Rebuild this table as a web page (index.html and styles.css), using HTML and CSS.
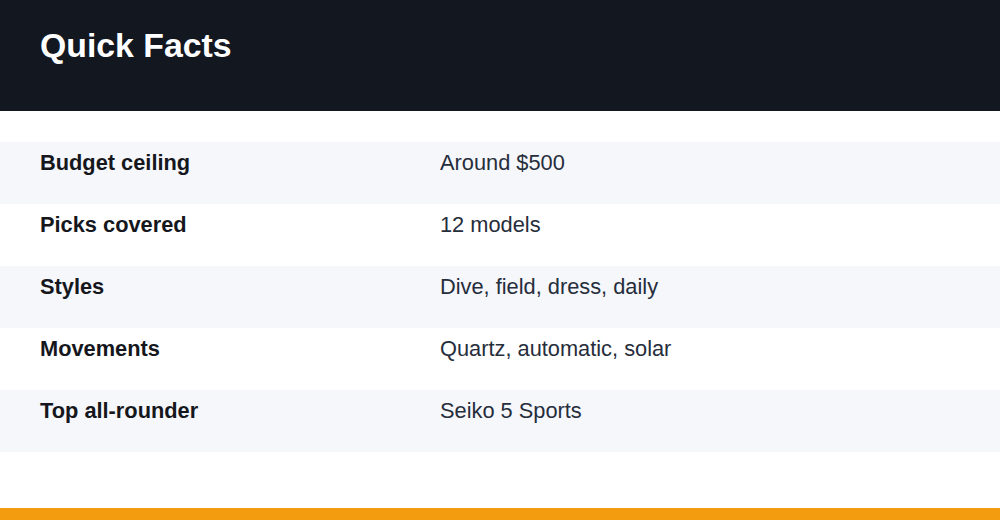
FILE: index.html
```html
<!DOCTYPE html>
<html lang="en">
<head>
<meta charset="utf-8">
<title>Quick Facts</title>
<link rel="stylesheet" href="styles.css">
</head>
<body>
<div class="page">
  <header class="header">
    <h1 class="title">Quick Facts</h1>
  </header>
  <main class="facts">
    <div class="row alt"><div class="label">Budget ceiling</div><div class="value">Around $500</div></div>
    <div class="row"><div class="label">Picks covered</div><div class="value">12 models</div></div>
    <div class="row alt"><div class="label">Styles</div><div class="value">Dive, field, dress, daily</div></div>
    <div class="row"><div class="label">Movements</div><div class="value">Quartz, automatic, solar</div></div>
    <div class="row alt"><div class="label">Top all-rounder</div><div class="value">Seiko 5 Sports</div></div>
  </main>
  <div class="accent"></div>
</div>
</body>
</html>
```

FILE: styles.css
```css
* { box-sizing: border-box; }
html, body { margin: 0; padding: 0; background: #ffffff; }
body { font-family: "Liberation Sans", Arial, sans-serif; }
.page { display: flex; flex-direction: column; height: 520px; }
.header { background: #131720; height: 111px; padding: 26px 40px 0; }
.title { margin: 0; color: #ffffff; font-size: 33.8px; font-weight: 700; line-height: normal; }
.facts { padding-top: 31px; display: flex; flex-direction: column; }
.row { display: grid; grid-template-columns: 400px 1fr; align-items: baseline; height: 62px; padding: 8px 40px 0; font-size: 21.8px; line-height: normal; }
.row.alt { background: #f5f7fb; }
.label { font-weight: 700; color: #15171d; }
.value { color: #262d3b; }
.accent { margin-top: auto; height: 12px; background: #f39c0f; }
```
